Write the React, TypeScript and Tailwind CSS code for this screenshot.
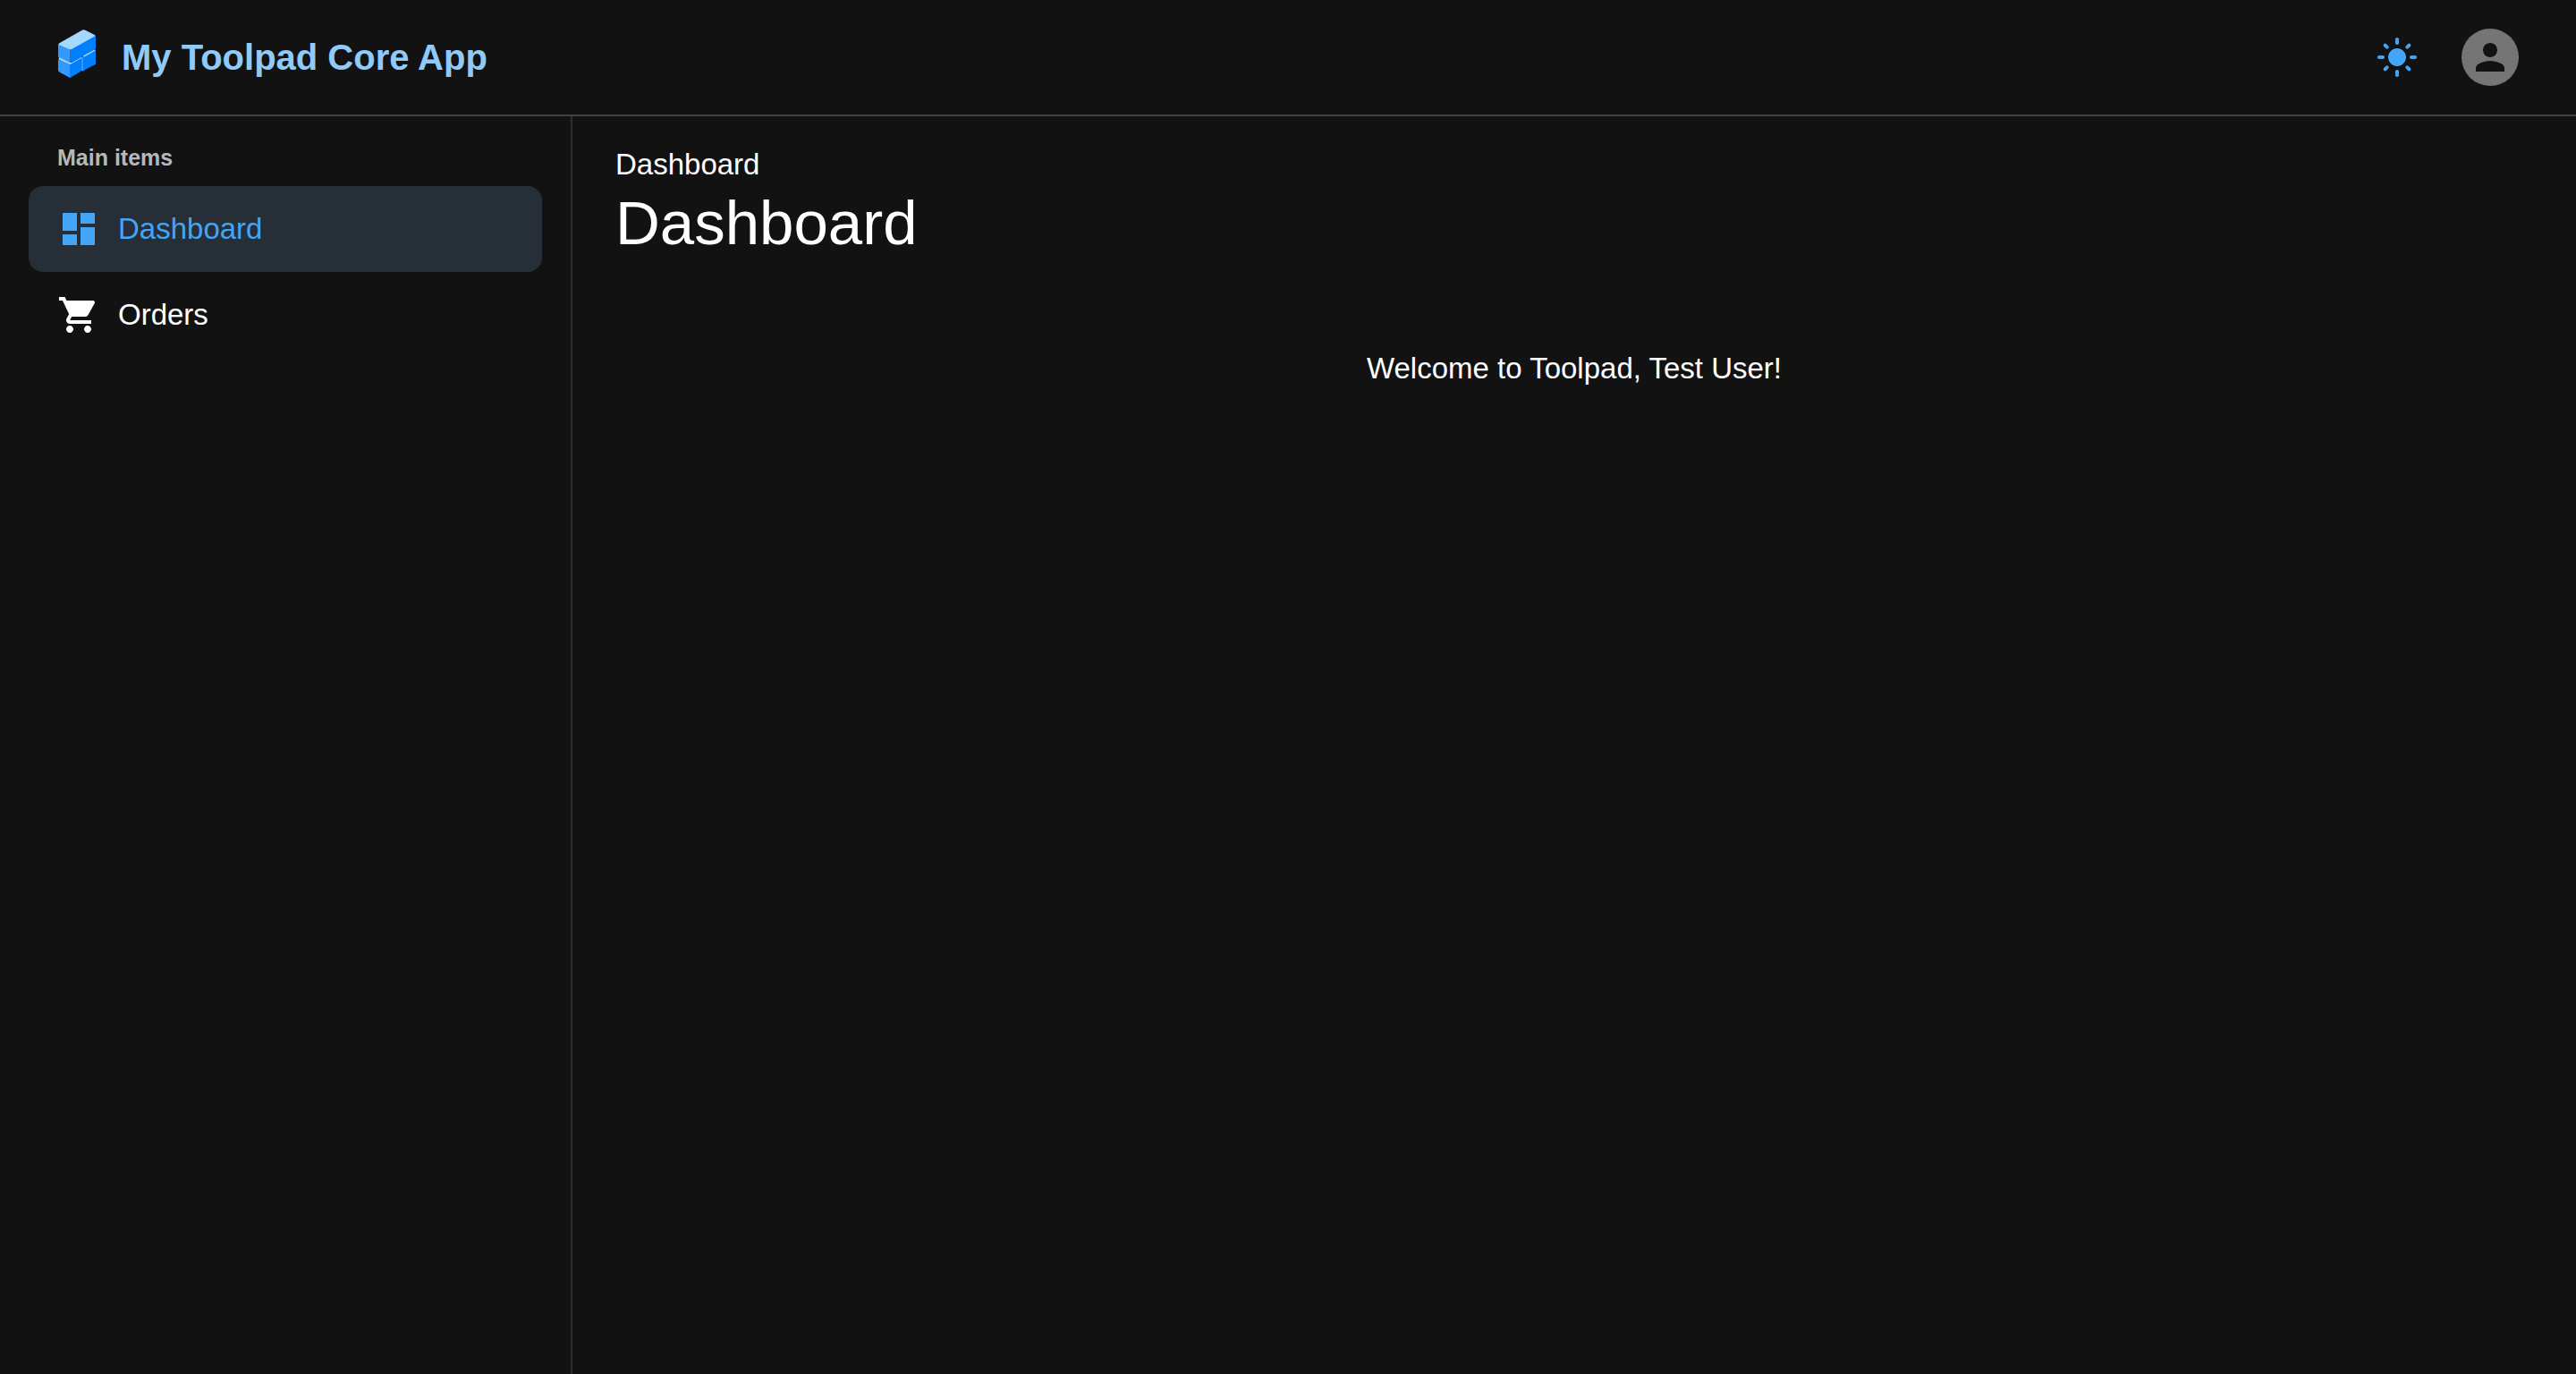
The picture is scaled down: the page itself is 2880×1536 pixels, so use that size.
import { MdDashboard, MdLightMode, MdPerson, MdShoppingCart } from "react-icons/md";

function Logo() {
  return (
    <svg viewBox="72 69 129 162" className="h-[54px] w-[43px]" aria-hidden="true">
      <path fill="#3399ff" d="M75 117L116 135V180L79 164Q75 162 75 158Z" />
      <path fill="#007fff" d="M116 135L201 88V132Q201 135 198 137L122 179Q118 181 116 180Z" />
      <path fill="#a5d8ff" d="M79 115L154 72Q160 68 166 71L196 86Q200 89 197 92L120 135Q116 137 112 135L79 121Q75 118 79 115Z" />
      <path fill="#a5d8ff" d="M79 163L114 179Q118 181 122 179L154 161V168L118 188Q115 189 112 187L79 171Q75 167 79 163Z" />
      <path fill="#a5d8ff" d="M160 157L195 138Q200 136 200 141L160 164Z" />
      <path fill="#3399ff" d="M75 173Q75 167 80 170L115 186V231L80 212Q75 209 75 205Z" />
      <path fill="#007fff" d="M114 187L153 165V205Q153 208 150 210L119 229Q116 231 114 230Z" />
      <path fill="#3399ff" d="M153 163L160 160V209L153 206Z" />
      <path fill="#007fff" d="M159 163L198 141Q201 140 201 143V182Q201 185 198 187L159 208Z" />
    </svg>
  );
}

const navItems = [
  { label: "Dashboard", Icon: MdDashboard, selected: true },
  { label: "Orders", Icon: MdShoppingCart, selected: false },
];

export default function App() {
  return (
    <div className="flex min-h-screen flex-col bg-[#121212] font-['Liberation_Sans',Arial,sans-serif] text-[33px] leading-[48px] text-white">
      <header className="flex h-[130px] items-center justify-between border-b-2 border-[#414141] px-16">
        <a href="#home" className="flex items-center gap-[29px]">
          <span className="-mt-2">
            <Logo />
          </span>
          <span className="text-[40px] leading-[64px] font-bold text-[#90caf9]">My Toolpad Core App</span>
        </a>
        <div className="flex items-center gap-8">
          <button type="button" aria-label="Switch to light mode" className="rounded-full p-4 text-[#42a5f5]">
            <MdLightMode className="size-12" />
          </button>
          <button
            type="button"
            aria-label="Account"
            className="flex size-16 items-center justify-center rounded-full bg-[#757575] text-[#121212]"
          >
            <MdPerson className="size-12" />
          </button>
        </div>
      </header>
      <div className="flex flex-1">
        <nav aria-label="Main items" className="w-[640px] shrink-0 border-r-2 border-[#2f2f2f] px-8 pt-[22px]">
          <h2 className="mb-2 px-8 text-[25px] leading-[48px] font-bold text-[#b8b8b8]">Main items</h2>
          <ul>
            {navItems.map(({ label, Icon, selected }) => (
              <li key={label}>
                <a
                  href={"#" + label.toLowerCase()}
                  aria-current={selected ? "page" : undefined}
                  className={
                    selected
                      ? "flex h-24 items-center gap-5 rounded-2xl bg-[#262f37] px-8 text-[#42a5f5]"
                      : "flex h-24 items-center gap-5 rounded-2xl px-8 text-white"
                  }
                >
                  <Icon className="size-12" />
                  <span>{label}</span>
                </a>
              </li>
            ))}
          </ul>
        </nav>
        <main className="min-w-0 flex-1 px-12 pt-[30px]">
          <a href="#dashboard" className="block w-fit">
            Dashboard
          </a>
          <h1 className="text-[69px] leading-[84px]">Dashboard</h1>
          <p className="mt-24 text-center">Welcome to Toolpad, Test User!</p>
        </main>
      </div>
    </div>
  );
}
